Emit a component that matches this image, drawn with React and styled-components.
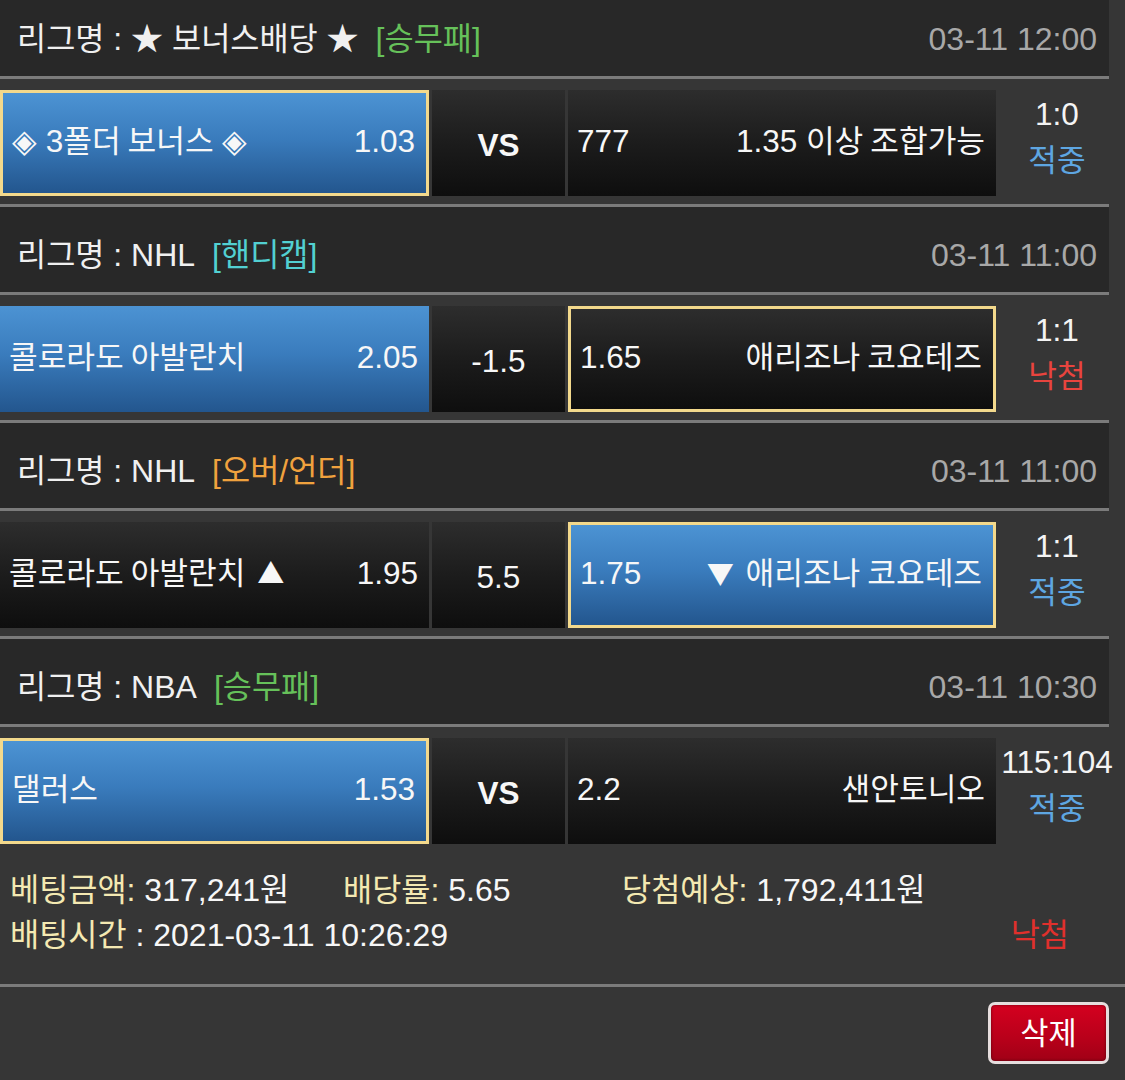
import React from "react";
import styled, { createGlobalStyle } from "styled-components";

const GlobalStyle = createGlobalStyle`
  html, body {
    margin: 0;
    padding: 0;
    background: #363636;
  }
  body {
    font-family: "Liberation Sans", "Noto Sans CJK KR", Arial, sans-serif;
    color: #f2f2f2;
  }
  * { box-sizing: border-box; }
`;

const SPLIT = /([\uAC00-\uD7A3]+(?:\s[\uAC00-\uD7A3]+)*|[▲▼])/;

const Hangul = styled.span`
  font-family: "Noto Sans CJK KR", sans-serif;
  font-size: 0.99em;
  line-height: 1;
`;

const Sym = styled.span`
  font-family: "Noto Sans CJK KR", sans-serif;
  font-size: 0.86em;
  line-height: 1;
  margin: 0 3px;
`;

function T({ children }) {
  return String(children)
    .split(SPLIT)
    .map((part, i) => {
      if (i % 2 === 0) return part;
      if (part === "▲" || part === "▼") return <Sym key={i}>{part}</Sym>;
      return <Hangul key={i}>{part}</Hangul>;
    });
}

const Page = styled.div`
  width: 1125px;
  height: 1080px;
  overflow: hidden;
  background: #363636;
`;

const List = styled.div`
  margin-top: -9px;
`;

const Block = styled.section`
  width: 1109px;
`;

const Header = styled.div`
  height: 88px;
  padding: 10px 12px 0 17px;
  background: #282828;
  border-bottom: 3px solid #7b7b7b;
  display: flex;
  align-items: center;
  justify-content: space-between;
  font-size: 32px;
  line-height: 40px;
  white-space: nowrap;
`;

const League = styled.div`
  color: #f0f0f0;
`;

const Tag = styled.span`
  margin-left: 17px;
  color: ${(p) => p.$color};
`;

const DateText = styled.div`
  color: #a8a8a8;
`;

const Row = styled.div`
  height: ${(p) => (p.$last ? "125px" : "128px")};
  padding-top: 11px;
  border-bottom: ${(p) => (p.$last ? "none" : "3px solid #7b7b7b")};
  display: grid;
  grid-template-columns: 429px 133px 428px 116px;
  column-gap: 3px;
  align-items: start;
`;

const blueBg = "linear-gradient(to bottom, #4c93d3 0%, #3a7cbd 45%, #23568e 100%)";
const darkBg = "linear-gradient(to bottom, #2d2d2d 0%, #1c1c1c 50%, #0e0e0e 100%)";

const Cell = styled.div`
  height: 106px;
  display: flex;
  align-items: center;
  justify-content: ${(p) => (p.$center ? "center" : "space-between")};
  padding: ${(p) => (p.$center ? "4px 0 0" : "0 11px 5px 9px")};
  background: ${(p) => (p.$blue ? blueBg : darkBg)};
  border: ${(p) => (p.$picked ? "3px solid #f3d98c" : "none")};
  font-size: 31.5px;
  line-height: 40px;
  font-weight: ${(p) => (p.$bold ? 700 : 400)};
  color: #f7f7f7;
  white-space: nowrap;
`;

const Score = styled.div`
  display: flex;
  flex-direction: column;
  align-items: center;
  padding-top: 1px;
  font-size: 31.5px;
  line-height: 46px;
  white-space: nowrap;
  color: #f4f4f4;
`;

const Result = styled.div`
  color: ${(p) => (p.$win ? "#5ea6e2" : "#e8443e")};
`;

const Footer = styled.div`
  padding: 16px 0 26px 10px;
  border-bottom: 3px solid #7b7b7b;
  font-size: 32px;
  line-height: 45px;
  white-space: nowrap;
`;

const InfoGrid = styled.div`
  display: grid;
  grid-template-columns: 333px 279px auto;
  height: 45px;
`;

const InfoLine = styled.div`
  display: flex;
  align-items: center;
  height: 45px;
  padding-right: 56px;
`;

const Label = styled.span`
  color: #f4e9b2;
`;

const Value = styled.span`
  color: #f7f7f7;
`;

const Status = styled.span`
  margin-left: auto;
  color: #e0302c;
`;

const ButtonBar = styled.div`
  display: flex;
  justify-content: flex-end;
  padding: 15px 16px 0 0;
`;

const DeleteButton = styled.button`
  width: 121px;
  height: 62px;
  border: 3px solid #e6dede;
  border-radius: 7px;
  background: linear-gradient(to bottom, #d4001f 0%, #b8001a 60%, #a00016 100%);
  box-shadow: inset 0 0 3px rgba(0, 0, 0, 0.5);
  color: #ffffff;
  font-family: "Liberation Sans", "Noto Sans CJK KR", sans-serif;
  font-size: 31px;
  line-height: 1;
  padding: 0 0 2px;
  cursor: pointer;
`;

const games = [
  {
    league: "★ 보너스배당 ★",
    type: "[승무패]",
    typeColor: "#66c15a",
    date: "03-11 12:00",
    home: { name: "◈ 3폴더 보너스 ◈", odds: "1.03", blue: true, picked: true },
    mid: { text: "VS", bold: true },
    away: { odds: "777", name: "1.35 이상 조합가능" },
    score: "1:0",
    win: true,
  },
  {
    league: "NHL",
    type: "[핸디캡]",
    typeColor: "#52d0d2",
    date: "03-11 11:00",
    home: { name: "콜로라도 아발란치", odds: "2.05", blue: true },
    mid: { text: "-1.5" },
    away: { odds: "1.65", name: "애리조나 코요테즈", picked: true },
    score: "1:1",
    win: false,
  },
  {
    league: "NHL",
    type: "[오버/언더]",
    typeColor: "#f0a23e",
    date: "03-11 11:00",
    home: { name: "콜로라도 아발란치 ▲", odds: "1.95" },
    mid: { text: "5.5" },
    away: { odds: "1.75", name: "▼ 애리조나 코요테즈", blue: true, picked: true },
    score: "1:1",
    win: true,
  },
  {
    league: "NBA",
    type: "[승무패]",
    typeColor: "#66c15a",
    date: "03-11 10:30",
    home: { name: "댈러스", odds: "1.53", blue: true, picked: true },
    mid: { text: "VS", bold: true },
    away: { odds: "2.2", name: "샌안토니오" },
    score: "115:104",
    win: true,
  },
];

export default function App() {
  return (
    <Page>
      <GlobalStyle />
      <List>
        {games.map((g, i) => (
          <Block key={i}>
            <Header>
              <League>
                <T>{`리그명 : ${g.league}`}</T>
                <Tag $color={g.typeColor}>
                  <T>{g.type}</T>
                </Tag>
              </League>
              <DateText>{g.date}</DateText>
            </Header>
            <Row $last={i === games.length - 1}>
              <Cell $blue={g.home.blue} $picked={g.home.picked}>
                <span>
                  <T>{g.home.name}</T>
                </span>
                <span>{g.home.odds}</span>
              </Cell>
              <Cell $center $bold={g.mid.bold}>
                {g.mid.text}
              </Cell>
              <Cell $blue={g.away.blue} $picked={g.away.picked}>
                <span>{g.away.odds}</span>
                <span>
                  <T>{g.away.name}</T>
                </span>
              </Cell>
              <Score>
                <div>{g.score}</div>
                <Result $win={g.win}>
                  <T>{g.win ? "적중" : "낙첨"}</T>
                </Result>
              </Score>
            </Row>
          </Block>
        ))}
      </List>
      <Footer>
        <InfoGrid>
          <div>
            <Label>
              <T>베팅금액:</T>
            </Label>{" "}
            <Value>
              <T>317,241원</T>
            </Value>
          </div>
          <div>
            <Label>
              <T>배당률:</T>
            </Label>{" "}
            <Value>5.65</Value>
          </div>
          <div>
            <Label>
              <T>당첨예상:</T>
            </Label>{" "}
            <Value>
              <T>1,792,411원</T>
            </Value>
          </div>
        </InfoGrid>
        <InfoLine>
          <Label>
            <T>배팅시간</T>
          </Label>
          <Value>&nbsp;: 2021-03-11 10:26:29</Value>
          <Status>
            <T>낙첨</T>
          </Status>
        </InfoLine>
      </Footer>
      <ButtonBar>
        <DeleteButton type="button">
          <T>삭제</T>
        </DeleteButton>
      </ButtonBar>
    </Page>
  );
}
